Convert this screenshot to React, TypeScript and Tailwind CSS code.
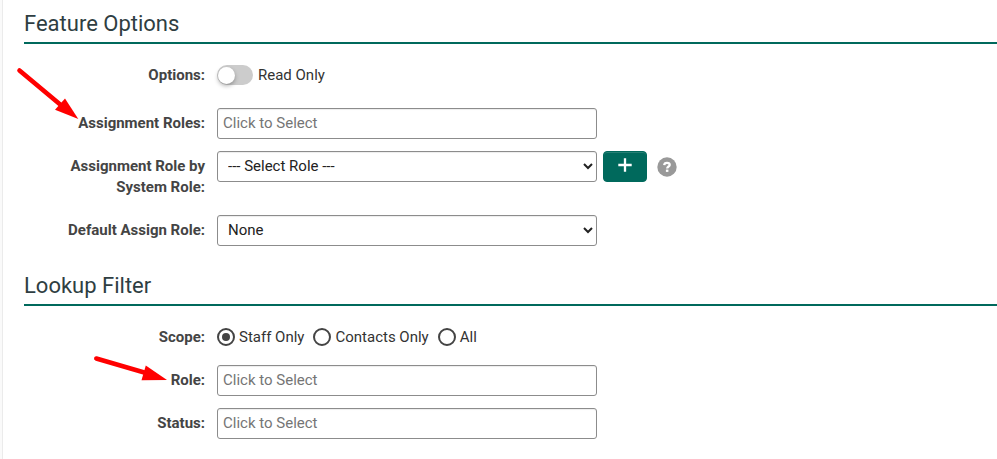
import type { ReactNode } from "react";

const field =
  "h-[31px] w-full max-w-[380px] rounded-[3px] border border-[#8c8c8c] bg-white pb-0.5 text-[15px] leading-[21px] shadow-[inset_0_1px_1px_rgba(0,0,0,0.075)]";

function Row({ label, htmlFor, children }: { label: string; htmlFor?: string; children: ReactNode }) {
  const labelClass = "w-[181px] shrink-0 py-[5px] pl-9 text-right font-bold text-[#444]";
  return (
    <div className="flex items-start gap-3">
      {htmlFor ? (
        <label htmlFor={htmlFor} className={labelClass}>{label}</label>
      ) : (
        <span className={labelClass}>{label}</span>
      )}
      <div className="flex min-h-[31px] grow items-center">{children}</div>
    </div>
  );
}

function SectionTitle({ children }: { children: ReactNode }) {
  return (
    <h2 className="mb-4 border-b-2 border-[#00695c] pb-0.5 text-[22px] leading-8 text-[#2f3e42]">
      {children}
    </h2>
  );
}

function PickerInput({ id }: { id: string }) {
  return (
    <input id={id} type="text" placeholder="Click to Select" className={`${field} px-[5px] placeholder:text-[#757575]`} />
  );
}

function RoleSelect({ id, option }: { id: string; option: string }) {
  return (
    <select id={id} className={`${field} px-1.5 text-[#222]`}>
      <option>{option}</option>
    </select>
  );
}

function ScopeRadio({ label, checked }: { label: string; checked?: boolean }) {
  return (
    <label className="flex items-start gap-1">
      <input
        type="radio"
        name="scope"
        defaultChecked={checked}
        className="mt-px grid size-[18px] appearance-none place-items-center rounded-full border-2 border-[#444] before:size-2 before:rounded-full checked:before:bg-[#444]"
      />
      {label}
    </label>
  );
}

export default function App() {
  return (
    <div className="bg-[#fafafa] pl-0.5">
      <main className="relative min-h-screen border-l border-[#ebebeb] bg-white pt-2 pl-[21px] font-[Roboto,sans-serif] text-[15px] leading-[21px] text-[#333]">
        <section>
          <SectionTitle>Feature Options</SectionTitle>
          <div className="flex flex-col gap-3">
            <div className="pb-[5px]">
              <Row label="Options:">
                <label className="flex items-start gap-[5px]">
                  <input
                    type="checkbox"
                    role="switch"
                    className="flex h-5 w-9 appearance-none items-center rounded-full bg-[#ccc] px-px before:size-[17px] before:rounded-full before:bg-white before:shadow-[0_2px_4px_rgba(0,0,0,0.3)] checked:justify-end checked:bg-[#00695c]"
                  />
                  Read Only
                </label>
              </Row>
            </div>
            <Row label="Assignment Roles:" htmlFor="assignment-roles">
              <PickerInput id="assignment-roles" />
            </Row>
            <Row label="Assignment Role by System Role:" htmlFor="system-role">
              <RoleSelect id="system-role" option="--- Select Role ---" />
              <button
                type="button"
                aria-label="Add role"
                className="ml-1.5 flex h-[31px] w-11 shrink-0 items-start justify-center rounded-[4px] border border-[#00695c] bg-[#00695c] pt-1.5 shadow-[inset_0_1px_0_rgba(255,255,255,0.15)]"
              >
                <svg viewBox="0 0 14 14" className="size-3.5" fill="none" stroke="white" strokeWidth="2.3">
                  <path d="M7 0.3V13.7M0.3 7H13.7" />
                </svg>
              </button>
              <button type="button" aria-label="Help" className="ml-2.5 shrink-0">
                <svg viewBox="0 0 20 20" className="size-5">
                  <circle cx="10" cy="10" r="9.7" fill="#999" />
                  <path d="M7.2 8.1C7.3 6.6 8.5 5.8 10 5.8S12.7 6.7 12.7 7.9C12.7 9.5 10.2 9.6 10.2 11.5" fill="none" stroke="white" strokeWidth="2.3" />
                  <rect x="8.9" y="12.6" width="2.5" height="2.3" fill="white" />
                </svg>
              </button>
            </Row>
            <Row label="Default Assign Role:" htmlFor="default-role">
              <RoleSelect id="default-role" option="None" />
            </Row>
          </div>
        </section>

        <section className="pt-6">
          <SectionTitle>Lookup Filter</SectionTitle>
          <div className="flex flex-col gap-3">
            <Row label="Scope:">
              <div role="radiogroup" aria-label="Scope" className="flex gap-[9px]">
                <ScopeRadio label="Staff Only" checked />
                <ScopeRadio label="Contacts Only" />
                <ScopeRadio label="All" />
              </div>
            </Row>
            <Row label="Role:" htmlFor="role">
              <PickerInput id="role" />
            </Row>
            <Row label="Status:" htmlFor="status">
              <PickerInput id="status" />
            </Row>
          </div>
        </section>

        <svg
          aria-hidden="true"
          viewBox="0 0 180 400"
          className="pointer-events-none absolute top-0 -left-[3px] h-[400px] w-[180px]"
          fill="#f00"
          stroke="#f00"
          strokeLinecap="round"
        >
          <path d="M19.5 70.5L62 106" strokeWidth="4.6" />
          <path d="M78.3 119L65 98.5L55 109.8Z" stroke="none" />
          <path d="M96.3 358.5L146 373" strokeWidth="4.6" />
          <path d="M167 380L145.8 365.5L141.5 380.3Z" stroke="none" />
        </svg>
      </main>
    </div>
  );
}
